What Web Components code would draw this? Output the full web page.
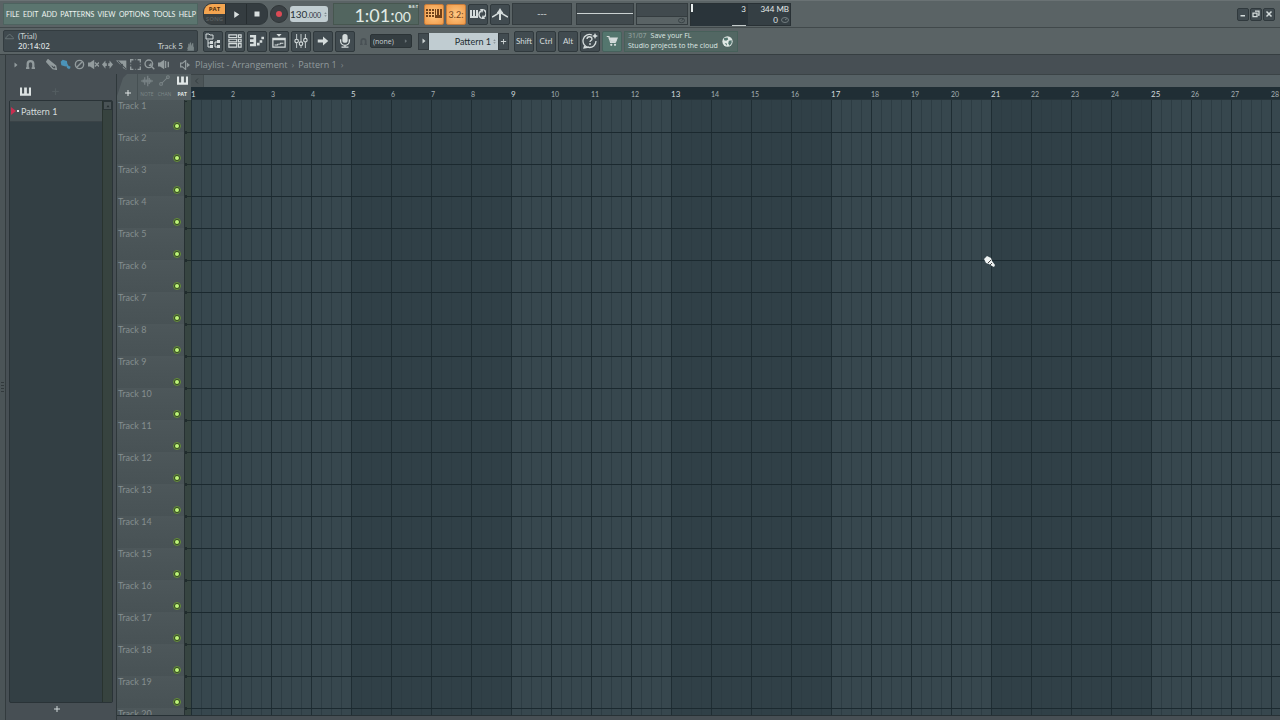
<!DOCTYPE html>
<html lang="en">
<head>
<meta charset="utf-8">
<title>Playlist - Arrangement</title>
<style>
  html, body { margin: 0; height: 100%; }
  body {
    --narrow: Lato, "Open Sans", sans-serif;
    --ui: "Open Sans", "Noto Sans", sans-serif;
    font-family: var(--ui);
    font-size: 9px;
    color: #c3cbcb;
    overflow: hidden;
    background: #474f54;
  }
</style>
</head>
<body>
<daw-app></daw-app>

<script>
  // 16x16 glyphs, drawn in currentColor
  const ICONS = {
    play: '<path d="M4 2l9 6-9 6z"/>',
    stop: '<path d="M3 3h10v10H3z"/>',
    typing: '<path d="M0 3h2v2H0zM3 3h2v2H3zM6 3h2v2H6zM0 6h2v2H0zM3 6h2v2H3zM6 6h2v2H6zM0 9h2v2H0zM3 9h2v2H3zM6 9h2v2H6z"/><path d="M9 3h1v6h1V3h2v6h1V3h2v9H9z"/>',
    loop: '<path d="M0 4h2v6h1V4h2v6h1V4h2v8H0z"/><path d="M11 12a4 4 0 0 1 0-7M14 4a4 4 0 0 1 0 7" fill="none" stroke="currentColor" stroke-width="1.500"/><path d="M10 3h4l-2 4zM15 13h-4l2-4z"/>',
    metro: '<path d="M0 11c3-1 5-4 8-4s5 3 8 4" fill="none" stroke="currentColor" stroke-width="1.500"/><path d="M8 2l3 5H5zM7 7h2v7H7z"/><path d="M5 6l3 2 3-2" fill="none" stroke="currentColor"/>',
    browser: '<path d="M1 1h3l1 1h3v4H1z" fill="none" stroke="currentColor"/><path d="M3 7v7h3M3 10h3M10 9v5h4M10 9h4" fill="none" stroke="currentColor"/><path d="M5 8h3v3H5zM5 12h3v3H5zM12 7h3v3h-3zM12 12h3v3h-3z"/>',
    channel: '<path d="M1 1h9v3H1zM1 6h9v3H1zM1 11h9v4H1z" fill="none" stroke="currentColor" stroke-width="1.3"/><path d="M12 1h3v3h-3zM12 6h3v3h-3zM12 11h3v4h-3z" fill="none" stroke="currentColor" stroke-width="1.3"/>',
    piano: '<path d="M0 1h7v13H0v-3h4V9H0V6h4V4H0z"/><path d="M8 10h3v3H8zM11 7h3v3h-3zM13 3h3v3h-3z"/>',
    playlist: '<path d="M5 0h6L8 3z"/><path d="M1 5h14v10H1z" fill="none" stroke="currentColor" stroke-width="1.4"/><path d="M1 5h14v2H1zM3 12h3v-1h3v-1h4v1h-3v1H7v1H3z"/>',
    mixer: '<path d="M3 0v16M8 0v16M13 0v16" fill="none" stroke="currentColor"/><circle cx="3" cy="8" r="2" fill="#414b50" stroke="currentColor" stroke-width="1.3"/><circle cx="8" cy="11" r="2" fill="#414b50" stroke="currentColor" stroke-width="1.3"/><circle cx="13" cy="7" r="2" fill="#414b50" stroke="currentColor" stroke-width="1.3"/>',
    arrow: '<path d="M1 6h7V2l7 6-7 6v-4H1z"/>',
    mic: '<rect x="5" y="0" width="6" height="10" rx="3"/><path d="M3 6v2a5 5 0 0 0 10 0V6M8 13v2M4 15h8" fill="none" stroke="currentColor" stroke-width="1.5"/>',
    help: '<path d="M10 2A6.500 6.500 0 1 0 14 8M3 12l-1 3 5-1" fill="none" stroke="currentColor" stroke-width="1.3"/><path d="M5 6c0-3 5-3 5 0 0 2-2 1-2 3M8 10v2" fill="none" stroke="currentColor" stroke-width="1.3"/><path d="M13 0l1 2 2 1-2 1-1 2-1-2-2-1 2-1z"/>',
    cart: '<path d="M1 2h3l2 8h7M4 4h11l-2 5H6z" fill="none" stroke="currentColor" stroke-width="1.4"/><path d="M5 4h10l-2 5H6z"/><circle cx="7" cy="13" r="1.500"/><circle cx="12" cy="13" r="1.500"/>',
    globe: '<circle cx="8" cy="8" r="7.500"/><path d="M3 3l5-1 1 3-3 2-3-1zM10 7l4-1v4l-3 4-2-3zM4 10l3 1v3z" fill="#52756e"/>',
    cloud: '<path d="M1 12c0-3 2-3 3-4 2-5 7-4 8 0 2 0 3 2 3 4z" fill="none" stroke="currentColor" stroke-width="1.2"/>',
    hand: '<path d="M3 15V9l1-1V3h2v4l1-6h2v6l2-5h2v6l1 1v6z"/><path d="M2 11h12v1H2zM2 14h12v1H2z"/>',
    min: '<path d="M3 10h9v3H3z"/>',
    restore: '<path d="M6 2h8v8h-2M2 6h8v7H2z" fill="none" stroke="currentColor" stroke-width="2.500"/>',
    close: '<path d="M3 3l10 10M13 3L3 13" stroke="currentColor" stroke-width="3"/>',
    tri: '<path d="M5 3l6 5-6 5z"/>',
    magnet: '<path d="M3 14V7a5 5 0 0 1 10 0v7" fill="none" stroke="currentColor" stroke-width="4"/><path d="M0 13h6v3H0zM10 13h6v3h-6z"/>',
    pencil: '<path d="M3 1l11 9 1 5-5-1L1 4zM4 4l8 7" fill="none" stroke="currentColor" stroke-width="2"/><path d="M3 1l7 6-2 3-7-6z"/>',
    brush: '<path d="M4 1l6 2 1 6-3 2-6-2-1-5z"/><path d="M9 8l5 6M10 12l5 0" fill="none" stroke="currentColor" stroke-width="3"/>',
    none: '<circle cx="8" cy="8" r="6" fill="none" stroke="currentColor" stroke-width="2"/><path d="M4 12l8-8" stroke="currentColor" stroke-width="2"/>',
    mute: '<path d="M0 5h3l6-4v14l-6-4H0z"/><path d="M10 5l6 6M16 5l-6 6" stroke="currentColor" stroke-width="2"/>',
    slip: '<path d="M0 8l5-6v4h6V2l5 6-5 6v-4H5v4z"/><path d="M7 1h2v14H7z" fill="#474f54"/>',
    slice: '<path d="M0 2h15v14l-5-3V7L6 8z"/><path d="M3 3l12 12" stroke="#474f54" stroke-width="1.500"/>',
    select: '<path d="M1 5V1h4M11 1h4v4M15 11v4h-4M5 15H1v-4" fill="none" stroke="currentColor" stroke-width="2"/><path d="M7 1h2M7 15h2M1 7v2M15 7v2" fill="none" stroke="currentColor"/>',
    zoom: '<circle cx="7" cy="7" r="5.500" fill="none" stroke="currentColor" stroke-width="2"/><path d="M11 11l4 4M7 9h3V6" fill="none" stroke="currentColor" stroke-width="2"/>',
    playback: '<path d="M0 5h3l6-4v14l-6-4H0zM10 3h2v10h-2zM14 4h2v8h-2z"/>',
    speaker: '<path d="M1 5h3l5-4v14l-5-4H1z" fill="none" stroke="currentColor" stroke-width="2"/><path d="M11 4l5 4-5 4z"/>',
    wave: '<path d="M0 8h16M3 6v4M5 3v10M7 6v4M9 1v14M11 4v8M13 6v4" fill="none" stroke="currentColor" stroke-width="1.500"/>',
    auto: '<path d="M4 12l8-8" stroke="currentColor" stroke-width="1.500"/><circle cx="3" cy="13" r="2" fill="none" stroke="currentColor" stroke-width="1.500"/><circle cx="13" cy="3" r="2" fill="none" stroke="currentColor" stroke-width="1.500"/>',
    keys: '<path d="M0 2h3v9h3V2h4v9h3V2h3v12H0z"/>',
    plus: '<path d="M7 2h2v5h5v2H9v5H7V9H2V7h5z"/>',
    left: '<path d="M10 3L5 8l5 5" fill="none" stroke="currentColor" stroke-width="2"/>',
    up: '<path d="M8 5l4 6H4z"/>',
    updown: '<path d="M8 1l4 5H4zM8 15l4-5H4z"/>',
    knob: '<ellipse cx="8" cy="8" rx="7" ry="5" fill="none" stroke="currentColor" stroke-width="2"/><path d="M8 8l4-3" stroke="currentColor" stroke-width="2"/>'
  };

  function svg(name, size = 12) {
    return `<svg width="${size}" height="${size}" viewBox="0 0 16 16" fill="currentColor" aria-hidden="true">${ICONS[name]}</svg>`;
  }

  const BASE = `
    * { box-sizing: border-box; }
    svg { display: block; flex: none; }
    button, select, a {
      font: inherit; color: inherit; margin: 0; padding: 0;
      border: 0; background: none; border-radius: 0; text-decoration: none;
    }
  `;

  class DawElement extends HTMLElement {
    constructor() {
      super();
      this.attachShadow({ mode: "open" });
    }
    connectedCallback() {
      this.shadowRoot.innerHTML = `<style>${BASE}${this.styles()}</style>${this.markup()}`;
    }
  }

  class ToolButton extends DawElement {
    styles() {
      return `
        :host { display: block; flex: none; width: 20px; height: 21px; }
        button {
          display: flex; align-items: center; justify-content: center;
          width: 100%; height: 100%;
          background: #414b50; color: #d5dcdc;
          border: 1px solid #30393d; border-radius: 2px;
          font: 8px var(--narrow);
        }
        :host([lit]) button {
          background: radial-gradient(#ffc985, #f19a48);
          border-color: #c67c3b; color: #70421b; font-size: 9px;
        }
        :host([green]) button { background: #54766e; border-color: #46615c; }
        :host([small]) { width: 12px; height: 13px; }
      `;
    }
    markup() {
      const icon = this.getAttribute("icon");
      const size = this.getAttribute("size") || 14;
      const label = this.getAttribute("label");
      return `<button type="button" ${label ? `aria-label="${label}"` : ""}>${icon ? svg(icon, size) : ""}<slot></slot></button>`;
    }
  }

  class MainMenu extends DawElement {
    styles() {
      return `
        :host { display: block; }
        nav {
          display: flex; align-items: center; justify-content: space-between;
          height: 22px; padding: 0 1px 0 2px;
          background: #5b756f; border: 1px solid #4d635f;
          font: 7px var(--narrow); color: #eef4f1;
        }
      `;
    }
    markup() {
      const items = ["FILE", "EDIT", "ADD", "PATTERNS", "VIEW", "OPTIONS", "TOOLS", "HELP"];
      return `<nav>${items.map((t) => `<a href="#">${t}</a>`).join("")}</nav>`;
    }
  }

  class HintPanel extends DawElement {
    styles() {
      return `
        :host {
          display: grid; grid-template-columns: 13px 1fr auto 12px;
          align-items: center; height: 22px; padding: 0 2px 0 1px;
          background: #3f494e; border: 1px solid #333c40; border-radius: 2px;
          font: 8px/10px var(--narrow); color: #c6cecf;
        }
        svg { color: #798486; }
        b { font: 600 8px/10px var(--ui); color: #d0d7d7; }
        .hand { grid-column: 4; justify-self: end; }
        .track { grid-column: 3; }
      `;
    }
    markup() {
      return `${svg("cloud", 9)}<span>(Trial)</span><i></i><i></i>
        <i></i><b>20:14:02</b><span class="track">Track 5</span><span class="hand">${svg("hand", 9)}</span>`;
    }
  }

  class TransportBar extends DawElement {
    styles() {
      return `
        :host { display: flex; align-items: center; gap: 2px; }
        .pill {
          display: flex; height: 22px; overflow: hidden;
          border: 1px solid #30383b; border-radius: 9px; background: #343c40;
        }
        .mode { display: grid; grid-template-rows: 10px 10px; width: 21px; font: 700 6px/8px var(--ui); }
        .mode button:first-child { background: #f4a550; color: #4d2b0c; }
        .mode button:last-child { background: #393f41; color: #565d5f; }
        .key { width: 21px; border-left: 1px solid #262d30; display: flex; align-items: center; justify-content: center; color: #d9dfdf; }
        .rec { width: 18px; height: 18px; border-radius: 9px; background: #3a4044; border: 1px solid #303638; display: flex; align-items: center; justify-content: center; }
        .rec::before { content: ""; width: 6px; height: 6px; border-radius: 3px; background: #db4a55; }
        .tempo {
          display: flex; align-items: baseline; justify-content: center;
          width: 38px; height: 16px; background: #c1cdd1; color: #293338;
          border-radius: 3px; font: 10px/16px var(--narrow);
        }
        .tempo small { font-size: 7px; }
        .tempo svg { align-self: center; color: #7d898e; margin-left: 2px; }
        .time {
          display: flex; justify-content: flex-end; position: relative;
          width: 86px; height: 22px; margin-left: 3px; padding-right: 7px;
          background: #52655f; border: 1px solid #46564f;
          font: 18px/22px var(--narrow); color: #e2ebe6;
        }
        .time small { font-size: 14px; }
        .time sup { position: absolute; top: 0; right: 0; font: 700 4px/5px var(--ui); }
      `;
    }
    markup() {
      return `
        <div class="pill">
          <div class="mode"><button type="button">PAT</button><button type="button">SONG</button></div>
          <button class="key" type="button" aria-label="Play">${svg("play", 9)}</button>
          <button class="key" type="button" aria-label="Stop">${svg("stop", 8)}</button>
        </div>
        <button class="rec" type="button" aria-label="Record"></button>
        <div class="tempo"><span>130<small>.000</small></span>${svg("updown", 5)}</div>
        <div class="time"><span>1:01:<small>00</small></span><sup>B:S:T</sup></div>
      `;
    }
  }

  class ScopePanel extends DawElement {
    styles() {
      return `
        :host { display: flex; gap: 2px; }
        div { height: 22px; background: #414a4e; border: 1px solid #343c3f; }
        .hint { width: 60px; text-align: center; line-height: 18px; margin-right: 2px; font-size: 10px; }
        .wave { width: 58px; padding-top: 9px; }
        .wave::before { content: ""; display: block; height: 1px; background: #cbd2d2; }
        .vis { width: 52px; display: flex; flex-direction: column; background: #5a6365; color: #353e41; }
        .vis::before { content: ""; height: 14px; background: #414a4e; border-bottom: 1px solid #343c3f; }
        .vis svg { align-self: flex-end; margin-right: 2px; }
      `;
    }
    markup() {
      return `<div class="hint">---</div><div class="wave"></div><div class="vis">${svg("knob", 7)}</div>`;
    }
  }

  class CpuMeter extends DawElement {
    styles() {
      return `
        :host {
          display: grid; grid-template-columns: 57px 1fr; width: 101px; height: 23px;
          background: #353f44; border: 1px solid #293135;
          font: 8px/11px var(--narrow); color: #e4eaea;
        }
        .load {
          background: #2a343a; padding-right: 2px; text-align: right;
          border-left: 2px solid #e8eeee; border-image: linear-gradient(#e8eeee 8px, transparent 8px) 1;
          display: flex; flex-direction: column; justify-content: space-between;
        }
        .load::after { content: ""; align-self: flex-end; width: 14px; height: 1px; background: #c3caca; }
        .mem { display: grid; grid-template-columns: 1fr auto; text-align: right; padding-right: 1px; }
        .mem span { grid-column: 1 / 3; }
        .mem em { font-style: normal; padding-right: 3px; }
        .mem svg { align-self: center; color: #727c7f; }
      `;
    }
    markup() {
      return `<div class="load">3</div><div class="mem"><span>344 MB</span><em>0</em>${svg("knob", 8)}</div>`;
    }
  }

  class PatternPicker extends DawElement {
    styles() {
      return `
        :host { display: flex; align-items: center; height: 21px; }
        select { appearance: none; outline: 0; }
        .snap-icon { color: #495155; margin-right: 3px; }
        .snap { width: 42px; height: 14px; padding: 0 2px; background: #343d41; border: 1px solid #2b3336; border-radius: 2px; color: #c8d0d1; font: 7px var(--ui); }
        .snap-box, .pat-box { display: flex; align-items: center; }
        .snap-box svg { margin-left: -9px; color: #697376; }
        .snap-box { margin-right: 9px; }
        .step { width: 11px; height: 17px; background: #414b50; border: 1px solid #343c40; color: #cdd4d4; display: flex; align-items: center; justify-content: center; }
        .pat { width: 69px; height: 17px; padding-right: 7px; background: #c0ccd1; color: #222c31; font: 9px var(--narrow); text-align-last: right; }
        .pat-box svg { margin-left: -6px; margin-right: 1px; color: #848f94; }
      `;
    }
    markup() {
      return `
        <span class="snap-icon">${svg("magnet", 7)}</span>
        <div class="snap-box"><select class="snap" aria-label="Snap"><option>(none)</option></select>${svg("tri", 6)}</div>
        <button class="step" type="button" aria-label="Pattern menu">${svg("tri", 8)}</button>
        <div class="pat-box"><select class="pat" aria-label="Pattern"><option>Pattern 1</option></select>${svg("updown", 5)}</div>
        <button class="step" type="button" aria-label="Add pattern">${svg("plus", 7)}</button>
      `;
    }
  }

  class NewsPanel extends DawElement {
    styles() {
      return `
        :host { display: block; }
        a {
          display: flex; align-items: center; justify-content: space-between;
          width: 114px; height: 21px; padding: 0 4px 0 3px;
          background: #526763; border: 1px solid #47605a;
          font: 7px/10px var(--ui); color: #dfe7e4; white-space: nowrap;
        }
        time { color: #9aa9a5; margin-right: 4px; }
      `;
    }
    markup() {
      return `<a href="#"><span><time>31/07</time>Save your FL<br>Studio projects to the cloud</span>${svg("globe", 11)}</a>`;
    }
  }

  class DawToolbar extends DawElement {
    styles() {
      return `
        :host { display: block; background: #5a6365; border-bottom: 1px solid #363e41; }
        .row { display: flex; align-items: center; height: 27px; padding: 0 5px 0 3px; border-top: 1px solid #6a7274; }
        .row + .row { border-top-color: #41494b; }
        main-menu, hint-panel { width: 195px; flex: none; margin-right: 5px; }
        .group { display: flex; align-items: center; gap: 2px; }
        .lit-group { margin: 0 2px 0 5px; }
        pattern-picker { margin: 0 5px 0 5px; }
        news-panel { margin-left: 2px; }
        cpu-meter { margin-left: 2px; }
        .window { margin-left: auto; gap: 1px; }
      `;
    }
    markup() {
      return `
        <div class="row">
          <main-menu></main-menu>
          <transport-bar></transport-bar>
          <div class="group lit-group">
            <tool-button lit size="16" icon="typing" label="Typing keyboard"></tool-button>
            <tool-button lit>3.2:</tool-button>
            <tool-button size="16" icon="loop" label="Loop recording"></tool-button>
            <tool-button size="16" icon="metro" label="Metronome"></tool-button>
          </div>
          <scope-panel></scope-panel>
          <cpu-meter></cpu-meter>
          <div class="group window">
            <tool-button small size="8" icon="min" label="Minimize"></tool-button>
            <tool-button small size="8" icon="restore" label="Restore"></tool-button>
            <tool-button small size="8" icon="close" label="Close"></tool-button>
          </div>
        </div>
        <div class="row">
          <hint-panel></hint-panel>
          <div class="group">
            <tool-button size="16" icon="browser" label="Browser"></tool-button>
            <tool-button icon="channel" label="Channel rack"></tool-button>
            <tool-button icon="piano" label="Piano roll"></tool-button>
            <tool-button icon="playlist" label="Playlist"></tool-button>
            <tool-button icon="mixer" label="Mixer"></tool-button>
            <tool-button size="12" icon="arrow" label="Next"></tool-button>
            <tool-button icon="mic" label="Record audio"></tool-button>
          </div>
          <pattern-picker></pattern-picker>
          <div class="group">
            <tool-button>Shift</tool-button>
            <tool-button>Ctrl</tool-button>
            <tool-button>Alt</tool-button>
            <tool-button size="16" icon="help" label="Help"></tool-button>
            <tool-button green size="12" icon="cart" label="Shop"></tool-button>
          </div>
          <news-panel></news-panel>
        </div>
      `;
    }
  }

  class PlaylistTitle extends DawElement {
    styles() {
      return `
        :host { display: flex; align-items: center; height: 19px; padding-left: 3px; color: #929b9d; }
        button { width: 14px; display: flex; justify-content: center; }
        .magnet { margin-right: 7px; }
        .brush { color: #4b93b8; }
        .speaker { margin: 0 3px 0 8px; }
        span { font-size: 9px; line-height: 14px; }
        i { font-style: normal; color: #7b8486; margin: 0 4px; }
      `;
    }
    markup() {
      const tools = ["pencil", "brush", "none", "mute", "slip", "slice", "select", "zoom", "playback"];
      return `
        <button class="menu" type="button" aria-label="Menu">${svg("tri", 8)}</button>
        <button class="magnet" type="button" aria-label="Snap">${svg("magnet", 9)}</button>
        ${tools.map((t) => `<button class="${t}" type="button" aria-label="${t}">${svg(t, 11)}</button>`).join("")}
        <button class="speaker" type="button" aria-label="Preview">${svg("speaker", 10)}</button>
        <span>Playlist - Arrangement<i>›</i>Pattern 1<i>›</i></span>
      `;
    }
  }

  class ClipPicker extends DawElement {
    styles() {
      return `
        :host { display: flex; flex-direction: column; width: 111px; padding: 0 4px 0 3px; }
        header { height: 26px; display: flex; align-items: center; gap: 20px; padding: 8px 0 0 11px; color: #dce2e2; }
        header .off { color: #535c60; }
        .list { flex: 1; display: flex; background: #333f44; border: 1px solid #2a3337; border-radius: 2px; }
        .items { flex: 1; border-right: 1px solid #29332f; }
        .item {
          display: flex; align-items: center; width: 100%; height: 21px; gap: 2px;
          background: #475154; border-bottom: 1px solid #3a4347;
          font: 9px var(--narrow); color: #d3dada; padding-left: 1px;
        }
        .item::before { content: ""; border-left: 5px solid #c82e50; border-top: 4px solid transparent; border-bottom: 4px solid transparent; }
        .scroll { width: 9px; background: #37433f; }
        .scroll button { width: 9px; height: 9px; background: #4a5356; border: 1px solid #2b3437; display: flex; justify-content: center; align-items: center; color: #272f32; }
        .dot { width: 2px; height: 2px; background: #dce2e2; margin-left: -1px; }
        footer { height: 17px; display: flex; justify-content: center; align-items: flex-start; padding-top: 2px; color: #d0d7d7; margin-right: 8px; }
      `;
    }
    markup() {
      return `
        <header>${svg("keys", 11)}<span class="off">${svg("plus", 9)}</span></header>
        <div class="list">
          <div class="items"><button class="item" type="button"><i class="dot"></i>Pattern 1</button></div>
          <div class="scroll"><button type="button" aria-label="Scroll up">${svg("up", 6)}</button></div>
        </div>
        <footer><button type="button" aria-label="Add clip">${svg("plus", 8)}</button></footer>
      `;
    }
  }

  class TrackHeader extends DawElement {
    styles() {
      return `
        :host {
          display: flex; justify-content: space-between; height: 32px; flex: none;
          padding: 0 3px 0 1px; background: linear-gradient(#4d575a, #485255);
          font: 9px/12px var(--narrow); color: #858e8f;
        }
        button {
          align-self: flex-end; width: 8px; height: 8px; margin-bottom: 2px;
          border: 1px solid #67913c; border-radius: 4px; background: #344525;
          display: flex; align-items: center; justify-content: center;
        }
        button::before { content: ""; width: 4px; height: 4px; border-radius: 2px; background: #bdf578; }
      `;
    }
    markup() {
      return `<slot></slot><button type="button" aria-label="Mute track"></button>`;
    }
  }

  class TimeRuler extends DawElement {
    styles() {
      return `
        :host { display: block; flex: 1; min-width: 0; }
        .scroll { height: 13px; background: #566165; border-top: 1px solid #3b4346; }
        .scroll button { width: 13px; height: 12px; background: #4c5558; border-right: 1px solid #434c4f; color: #343d40; display: flex; align-items: center; justify-content: center; }
        .bars { display: flex; height: 13px; background: #202e35; overflow: hidden; border-bottom: 1px solid #26343a; }
        .bars span { flex: none; width: 40px; font: 7px/14px var(--narrow); color: #a4afb3; }
        .bars .major { font-size: 8px; color: #d3dbde; }
      `;
    }
    markup() {
      let bars = "";
      for (let i = 1; i <= 28; i++) {
        bars += `<span class="${i % 4 === 1 ? "major" : ""}">${i}</span>`;
      }
      return `<div class="scroll"><button type="button" aria-label="Scroll left">${svg("left", 8)}</button></div><div class="bars">${bars}</div>`;
    }
  }

  class ModeTabs extends DawElement {
    styles() {
      return `
        :host {
          display: flex; width: 74px; height: 26px; flex: none;
          background: #545e61; clip-path: polygon(10px 0, 100% 0, 100% 100%, 0 100%, 0 22px, 6px 4px);
          color: #7c8688;
        }
        .add { width: 21px; display: flex; align-items: flex-end; justify-content: center; padding: 0 0 3px 2px; border-right: 1px solid #465053; color: #dfe5e5; }
        .tab { flex: 1; display: flex; flex-direction: column; align-items: center; justify-content: space-between; padding: 1px 0 2px; font: 5px/7px var(--ui); }
        .on { color: #e2e8e8; font-weight: 700; }
      `;
    }
    markup() {
      return `
        <button class="add" type="button" aria-label="Add track">${svg("plus", 8)}</button>
        <button class="tab" type="button">${svg("wave", 12)}NOTE</button>
        <button class="tab" type="button">${svg("auto", 11)}CHAN</button>
        <button class="tab on" type="button">${svg("keys", 11)}PAT</button>
      `;
    }
  }

  class ClipCanvas extends DawElement {
    styles() {
      // beats every 10px, bars every 40px, shading flips every four bars, tracks every 32px
      return `
        :host {
          display: block; flex: 1; min-width: 0; position: relative;
          background:
            repeating-linear-gradient(#0000 0 31px, #1b292f 31px 32px),
            repeating-linear-gradient(90deg, #1f2d33 0 1px, #0000 1px 40px),
            repeating-linear-gradient(90deg, #2d3c43 0 1px, #0000 1px 10px),
            repeating-linear-gradient(90deg, #37474e 0 160px, #304047 160px 320px);
          background-position: 0 1px, 0 0, 0 0, 0 0;
        }
        .cursor { position: absolute; left: 792px; top: 155px; }
      `;
    }
    markup() {
      return `<svg class="cursor" width="13" height="13" viewBox="0 0 13 13" aria-hidden="true">
        <path d="M1 4l3-3 4 2 1 3 3 4-1 2-2-1-3-2-3-1z" fill="#eef2f2"/>
        <path d="M5 8l3-3M7 10l2-2" stroke="#444" stroke-width="1"/></svg>`;
    }
  }

  class ArrangementView extends DawElement {
    styles() {
      return `
        :host { display: flex; flex-direction: column; flex: 1; min-width: 0; border-left: 1px solid #2f383b; margin-left: -1px; }
        .head { display: flex; flex: none; }
        .body { display: flex; flex: 1; min-height: 0; overflow: hidden; border-bottom: 1px solid #273135; margin-bottom: 4px; }
        .tracks { width: 67px; flex: none; overflow: hidden; display: flex; flex-direction: column; }
        .meter {
          width: 7px; flex: none; border-left: 1px solid #273133;
          background:
            repeating-linear-gradient(#202c2c 0 1px, #0000 1px 30px, #202c2c 30px 32px) 0 1px / 2px 100% no-repeat,
            repeating-linear-gradient(#0000 0 31px, #202c2c 31px 32px) 0 1px,
            #374541;
        }
      `;
    }
    markup() {
      let tracks = "";
      for (let i = 1; i <= 20; i++) tracks += `<track-header>Track ${i}</track-header>`;
      return `
        <div class="head"><mode-tabs></mode-tabs><time-ruler></time-ruler></div>
        <div class="body">
          <div class="tracks">${tracks}</div>
          <div class="meter"></div>
          <clip-canvas></clip-canvas>
        </div>
      `;
    }
  }

  class DawApp extends DawElement {
    styles() {
      return `
        :host { display: flex; flex-direction: column; height: 100vh; }
        .window { flex: 1; display: flex; min-height: 0; background: #474f54; }
        .edge { width: 6px; flex: none; border-right: 1px solid #333b3e; background: #4b5457; display: flex; align-items: center; }
        .edge::before { content: ""; width: 3px; height: 11px; margin-left: 1px; background: repeating-linear-gradient(#32393c 0 1px, #0000 1px 3px); }
        .main { flex: 1; display: flex; flex-direction: column; min-width: 0; }
        .panes { flex: 1; display: flex; min-height: 0; }
      `;
    }
    markup() {
      return `
        <daw-toolbar></daw-toolbar>
        <div class="window">
          <div class="edge"></div>
          <div class="main">
            <playlist-title></playlist-title>
            <div class="panes">
              <clip-picker></clip-picker>
              <arrangement-view></arrangement-view>
            </div>
          </div>
        </div>
      `;
    }
  }

  customElements.define("tool-button", ToolButton);
  customElements.define("main-menu", MainMenu);
  customElements.define("hint-panel", HintPanel);
  customElements.define("transport-bar", TransportBar);
  customElements.define("scope-panel", ScopePanel);
  customElements.define("cpu-meter", CpuMeter);
  customElements.define("pattern-picker", PatternPicker);
  customElements.define("news-panel", NewsPanel);
  customElements.define("daw-toolbar", DawToolbar);
  customElements.define("playlist-title", PlaylistTitle);
  customElements.define("clip-picker", ClipPicker);
  customElements.define("track-header", TrackHeader);
  customElements.define("time-ruler", TimeRuler);
  customElements.define("mode-tabs", ModeTabs);
  customElements.define("clip-canvas", ClipCanvas);
  customElements.define("arrangement-view", ArrangementView);
  customElements.define("daw-app", DawApp);
</script>
</body>
</html>
